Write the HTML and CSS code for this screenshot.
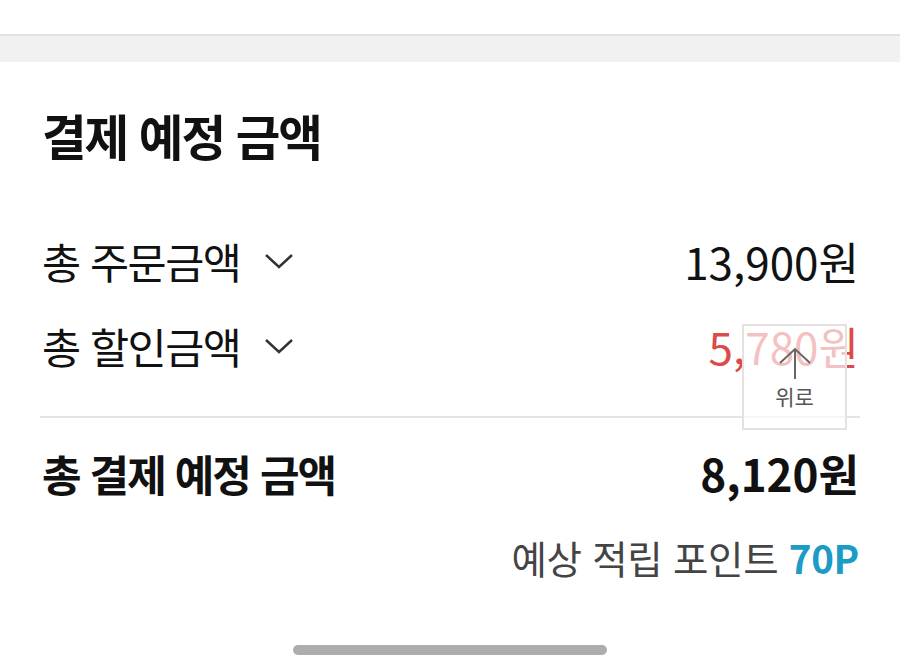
FILE: index.html
```html
<!DOCTYPE html>
<html lang="ko">
<head>
  <meta charset="UTF-8" />
  <meta name="viewport" content="width=device-width, initial-scale=1.0" />
  <title>결제 예정 금액</title>
  <link rel="stylesheet" href="styles.css">
</head>
<body>
  <div class="top-bar"></div>
  <div class="section-gap"></div>

  <!-- 결제 예정 금액 -->
  <section class="summary">
    <h2 class="summary-title">결제 예정 금액</h2>

    <div class="row">
      <span class="row-label">총 주문금액
        <svg class="chevron" viewBox="0 0 30 16"><path d="M2 2 L15 14 L28 2" /></svg>
      </span>
      <span class="row-value">13,900원</span>
    </div>

    <div class="row">
      <span class="row-label">총 할인금액
        <svg class="chevron" viewBox="0 0 30 16"><path d="M2 2 L15 14 L28 2" /></svg>
      </span>
      <span class="row-value discount">5,780원</span>
    </div>

    <div class="total-row">
      <span class="total-label">총 결제 예정 금액</span>
      <span class="total-value">8,120원</span>
    </div>

    <div class="points">예상 적립 포인트 <strong>70P</strong></div>

    <!-- 맨 위로 버튼 -->
    <a class="to-top" href="#">
      <svg viewBox="0 0 32 32"><path d="M16 32 V2 M1 16 L16 2 L31 16" /></svg>
      <span>위로</span>
    </a>
  </section>

  <div class="home-indicator"></div>
</body>
</html>
```

FILE: styles.css
```css
body {
  margin: 0;
  font-family: "Noto Sans CJK KR", "Noto Sans", sans-serif;
  background: #fff;
  color: #111;
  width: 900px;
  height: 670px;
  overflow: hidden;
  position: relative;
}
.top-bar {
  height: 34px;
  background: #fff;
  border-bottom: 2px solid #e2e2e2;
}
.section-gap {
  height: 26px;
  background: #f1f1f1;
}
.summary {
  position: relative;
  padding: 0 41px 0 42px;
}
.summary-title {
  margin: 0;
  padding-top: 41px;
  font-size: 48.5px;
  font-weight: 700;
  letter-spacing: -2px;
  line-height: 64px;
}
.row {
  display: flex;
  justify-content: space-between;
  align-items: center;
  height: 85px;
  font-size: 42.5px;
  letter-spacing: -1.5px;
}
.row:first-of-type {
  margin-top: 51px;
}
.row-label {
  display: flex;
  align-items: center;
  gap: 24px;
}
.chevron {
  width: 30px;
  height: 16px;
  fill: none;
  stroke: #333;
  stroke-width: 2.4;
}
.row-value {
  font-size: 44px;
  letter-spacing: 0;
}
.discount {
  color: #dc4a4a;
}
.total-row {
  display: flex;
  justify-content: space-between;
  align-items: center;
  margin: 28px -1px 0 -2px;
  padding: 23px 1px 0 2px;
  border-top: 2px solid #e4e4e4;
  font-size: 43px;
  line-height: 64px;
  font-weight: 700;
  letter-spacing: -2px;
}
.total-value {
  font-size: 44px;
  letter-spacing: 0;
}
.points {
  margin-top: 24px;
  text-align: right;
  font-size: 38.5px;
  line-height: 56px;
  color: #444;
  letter-spacing: -0.3px;
}
.points strong {
  color: #1b9bc6;
  font-weight: 700;
}
.to-top {
  position: absolute;
  left: 742px;
  top: 262px;
  width: 105px;
  height: 106px;
  box-sizing: border-box;
  border: 2px solid #e6e1de;
  background: rgba(255, 255, 255, 0.66);
  display: flex;
  flex-direction: column;
  align-items: center;
  text-decoration: none;
  color: #555;
}
.to-top svg {
  width: 32px;
  height: 32px;
  margin-top: 21px;
  fill: none;
  stroke: #666;
  stroke-width: 2;
}
.to-top span {
  font-size: 21px;
  line-height: 24px;
  margin-top: 5px;
}
.home-indicator {
  position: absolute;
  left: 293px;
  top: 645px;
  width: 314px;
  height: 10px;
  border-radius: 5px;
  background: #adadad;
}
```
